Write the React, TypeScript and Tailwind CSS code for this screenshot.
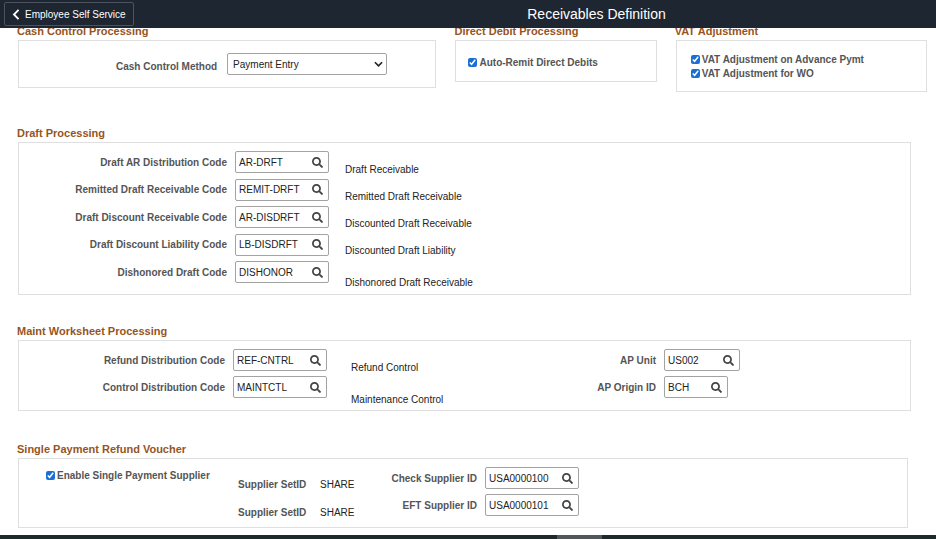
import type { ReactNode } from "react";
import { FaSearch } from "react-icons/fa";

function Section({ title, children, className = "" }: { title: string; children: ReactNode; className?: string }) {
  return (
    <section className={className}>
      <h2 className="text-[11px] leading-4 font-bold text-[#96551f]">{title}</h2>
      {children}
    </section>
  );
}

const panel = "ml-px mt-px border border-[#dfdfdf]";
const label = "text-[10px] font-bold text-[#555555] whitespace-nowrap";

function Lookup({ id, text, value, width = "w-[94px]" }: { id: string; text: string; value: string; width?: string }) {
  return (
    <div className="flex h-[22px] items-center gap-2">
      <label htmlFor={id} className={`${label} flex-1 text-right`}>
        {text}
      </label>
      <div className="w-[94px]">
        <div className={`flex h-[22px] items-center rounded-xs border border-[#a3a3a3] bg-white ${width}`}>
          <input id={id} defaultValue={value} className="min-w-0 flex-1 bg-transparent pl-[3px] text-[10px] text-[#222222] outline-none" />
          <button type="button" aria-label={`Look up ${text}`} className="flex h-full w-[21px] items-center justify-center text-[#444444]">
            <FaSearch size={11} />
          </button>
        </div>
      </div>
    </div>
  );
}

function Check({ text }: { text: string }) {
  return (
    <label className={`${label} flex h-[14px] items-center gap-[2px]`}>
      <input type="checkbox" defaultChecked className="size-[9px] accent-[#1a6fd4]" />
      {text}
    </label>
  );
}

const draftCodes = [
  { id: "draft-ar", text: "Draft AR Distribution Code", value: "AR-DRFT" },
  { id: "remitted", text: "Remitted Draft Receivable Code", value: "REMIT-DRFT" },
  { id: "discount-rec", text: "Draft Discount Receivable Code", value: "AR-DISDRFT" },
  { id: "discount-liab", text: "Draft Discount Liability Code", value: "LB-DISDRFT" },
  { id: "dishonored", text: "Dishonored Draft Code", value: "DISHONOR" },
];

export default function App() {
  return (
    <div className="flex min-h-screen flex-col overflow-hidden bg-white font-['Liberation_Sans',Arial,sans-serif] text-[10px] text-[#222222]">
      <header className="relative z-10 flex h-7 shrink-0 items-center bg-[#1e2632] pl-1 text-white">
        <button type="button" className="flex h-6 w-[130px] shrink-0 items-center gap-[5px] rounded-xs border border-[#4a535e] pl-[7px] whitespace-nowrap">
          <svg viewBox="0 0 8 12" className="h-[11px] w-[8px]" fill="none" stroke="currentColor" strokeWidth="2" aria-hidden="true">
            <path d="M6.8 1 1.8 6l5 5" />
          </svg>
          Employee Self Service
        </button>
        <h1 className="ml-[123px] flex-1 text-center text-[14px] leading-5">Receivables Definition</h1>
      </header>

      <main className="-mt-[5px] flex-1 pl-[17px]">
        <div className="grid grid-cols-[419fr_202fr_252fr] items-start gap-x-[18px] pr-[9px]">
          <Section title="Cash Control Processing">
            <div className={`${panel} flex items-center gap-[10px] pt-3 pb-3 pl-[97px]`}>
              <label htmlFor="cash-method" className={`${label} pt-1`}>
                Cash Control Method
              </label>
              <div className="relative">
                <select id="cash-method" className="block h-[22px] w-[160px] appearance-none rounded-xs border border-[#a3a3a3] bg-white pl-[5px] text-[10px]">
                  <option>Payment Entry</option>
                </select>
                <svg viewBox="0 0 10 6" className="pointer-events-none absolute top-2 right-1 h-[6px] w-[9px]" fill="none" stroke="#222222" strokeWidth="1.8" aria-hidden="true">
                  <path d="m1 1 4 4 4-4" />
                </svg>
              </div>
            </div>
          </Section>
          <Section title="Direct Debit Processing">
            <div className={`${panel} pt-[14px] pb-3 pl-3`}>
              <Check text="Auto-Remit Direct Debits" />
            </div>
          </Section>
          <Section title="VAT Adjustment">
            <div className={`${panel} pt-[11px] pb-[11px] pl-[14px]`}>
              <Check text="VAT Adjustment on Advance Pymt" />
              <Check text="VAT Adjustment for WO" />
            </div>
          </Section>
        </div>

        <Section title="Draft Processing" className="mt-[33px] mr-[25px]">
          <div className={`${panel} flex h-[153px] pt-2`}>
            <div className="flex h-[132px] w-[310px] flex-col justify-between">
              {draftCodes.map((c) => (
                <Lookup key={c.id} {...c} />
              ))}
            </div>
            <div className="flex flex-col gap-[11px] pt-[11px] pl-4 leading-4">
              <p>Draft Receivable</p>
              <p>Remitted Draft Receivable</p>
              <p>Discounted Draft Receivable</p>
              <p>Discounted Draft Liability</p>
              <p className="pt-[5px]">Dishonored Draft Receivable</p>
            </div>
          </div>
        </Section>

        <Section title="Maint Worksheet Processing" className="mt-7 mr-[25px]">
          <div className={`${panel} flex h-[71px] pt-2`}>
            <div className="flex w-[308px] flex-col gap-[5px]">
              <Lookup id="refund" text="Refund Distribution Code" value="REF-CNTRL" />
              <Lookup id="control" text="Control Distribution Code" value="MAINTCTL" />
            </div>
            <div className="flex w-[224px] flex-col gap-4 pt-[11px] pl-6 leading-4">
              <p>Refund Control</p>
              <p>Maintenance Control</p>
            </div>
            <div className="flex w-[207px] flex-col gap-[5px]">
              <Lookup id="ap-unit" text="AP Unit" value="US002" width="w-[76px]" />
              <Lookup id="ap-origin" text="AP Origin ID" value="BCH" width="w-[64px]" />
            </div>
          </div>
        </Section>

        <Section title="Single Payment Refund Voucher" className="mt-[30px] mr-[28px]">
          <div className={`${panel} flex h-[70px] pt-2`}>
            <div className="w-[219px] pt-px pl-[27px]">
              <Check text="Enable Single Payment Supplier" />
            </div>
            <dl className="grid w-[120px] grid-cols-[70px_auto] content-start gap-x-3 gap-y-3 pt-[10px] leading-4">
              <dt className={label}>Supplier SetID</dt>
              <dd>SHARE</dd>
              <dt className={label}>Supplier SetID</dt>
              <dd>SHARE</dd>
            </dl>
            <div className="flex w-[221px] flex-col gap-[5px]">
              <Lookup id="check-supplier" text="Check Supplier ID" value="USA0000100" />
              <Lookup id="eft-supplier" text="EFT Supplier ID" value="USA0000101" />
            </div>
          </div>
        </Section>
      </main>

      <footer className="mt-[7px] flex h-1 shrink-0 bg-[#1e292e] pl-[557px]">
        <div className="w-[45px] bg-[#50585c]" />
      </footer>
    </div>
  );
}
